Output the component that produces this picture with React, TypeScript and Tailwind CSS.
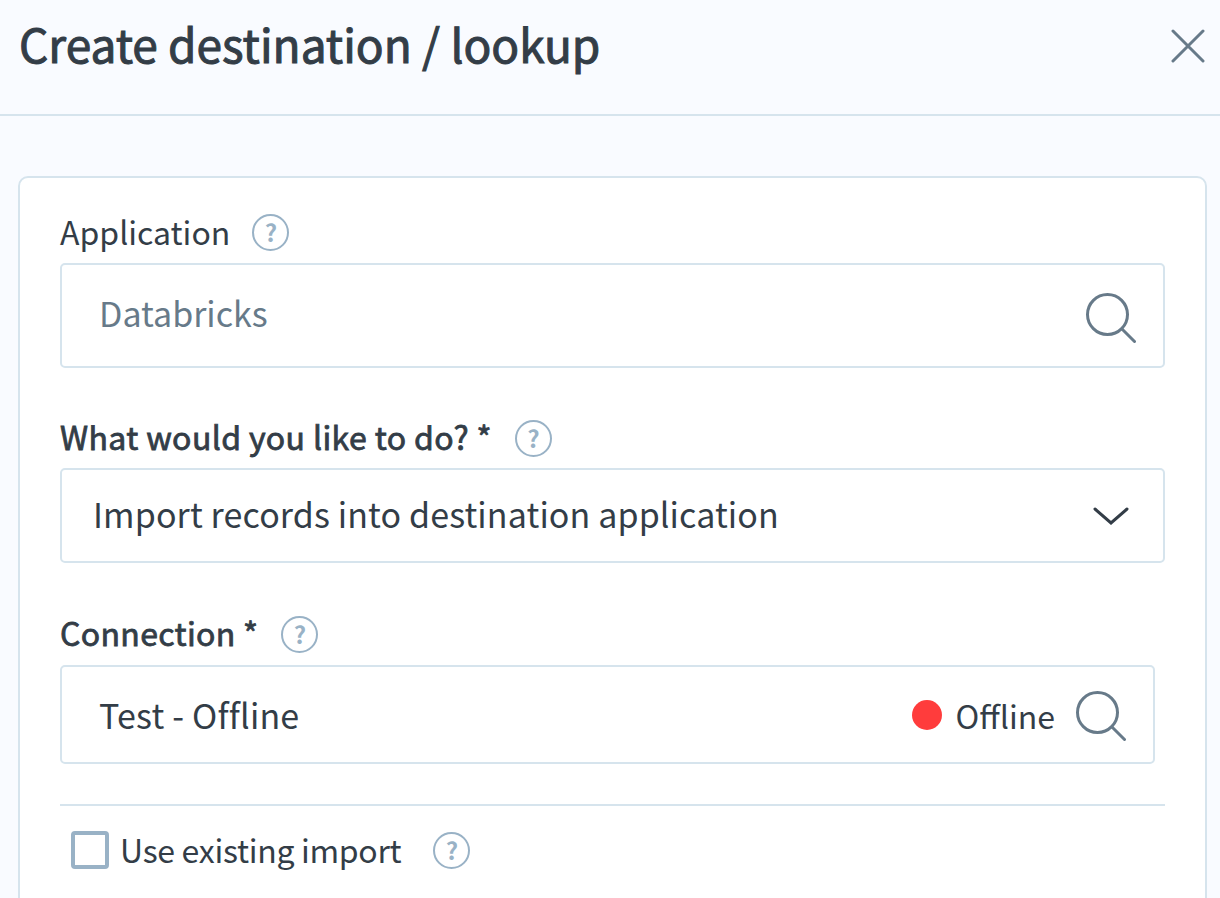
import type { JSX } from 'react';

const font = { fontFamily: '"Noto Sans CJK JP", "Noto Sans", sans-serif' };

function HelpIcon(): JSX.Element {
  return (
    <span className="flex h-[37px] w-[37px] items-center justify-center rounded-full border-2 border-[#99b2c6] bg-white text-[24px] font-bold leading-none text-[#99b2c6]">
      ?
    </span>
  );
}

function SearchIcon({ className }: { className: string }): JSX.Element {
  return (
    <svg className={className} width="50" height="50" viewBox="0 0 50 50" fill="none" stroke="#677a89" strokeWidth="3" strokeLinecap="round">
      <circle cx="21.5" cy="21.5" r="20" />
      <path d="M36.5 36.5L48.5 48.5" />
    </svg>
  );
}

export default function App(): JSX.Element {
  return (
    <div style={font} className="h-[898px] w-[1220px] overflow-hidden bg-[#f9fbff] text-[#333d47]">
      <header className="flex h-[116px] items-start justify-between border-b-2 border-[#d6e4ed] pl-[19px] pr-[15px]">
        <h1 className="mt-[13px] text-[46px] leading-[60px] [-webkit-text-stroke:1px_#333d47]">Create destination / lookup</h1>
        <svg className="mt-[29px]" width="34" height="34" viewBox="0 0 34 34" fill="none" stroke="#677a89" strokeWidth="3" strokeLinecap="round">
          <path d="M2 2L32 32M32 2L2 32" />
        </svg>
      </header>

      <main className="ml-[18px] mt-[60px] h-[760px] w-[1189px] rounded-[10px] border-2 border-[#d6e4ed] bg-white pl-[40px] pr-[40px] pt-[34px]">
        <div className="flex h-[40px] items-center gap-[22px]">
          <label className="pb-[2px] text-[32px] leading-none">Application</label>
          <HelpIcon />
        </div>
        <div className="mt-[11px] flex h-[105px] w-[1105px] items-center justify-between rounded-[5px] border-2 border-[#d6e4ed] pl-[37px] pr-[27px]">
          <span className="pb-[6px] text-[34px] text-[#677a89]">Databricks</span>
          <SearchIcon className="mt-[5px]" />
        </div>

        <div className="mt-[50px] flex h-[40px] items-center gap-[23px]">
          <label className="pb-[4px] text-[32px] leading-none tracking-[0.38px] [-webkit-text-stroke:0.8px_#333d47]">What would you like to do? *</label>
          <HelpIcon />
        </div>
        <div className="mt-[10px] flex h-[95px] w-[1105px] items-center justify-between rounded-[5px] border-2 border-[#d6e4ed] pl-[31px] pr-[34px]">
          <span className="pb-[4px] text-[34px] tracking-[0.12px]">Import records into destination application</span>
          <svg width="36" height="20" viewBox="0 0 36 20" fill="none" stroke="#333d47" strokeWidth="3" strokeLinecap="round">
            <path d="M2 3L18 17L34 3" />
          </svg>
        </div>

        <div className="mt-[51px] flex h-[40px] items-center gap-[23px]">
          <label className="pb-[4px] text-[32px] leading-none tracking-[0.33px] [-webkit-text-stroke:0.8px_#333d47]">Connection *</label>
          <HelpIcon />
        </div>
        <div className="mt-[11px] flex h-[99px] w-[1095px] items-center justify-between rounded-[5px] border-2 border-[#d6e4ed] pl-[37px] pr-[27px]">
          <span className="text-[34px] tracking-[0.2px]">Test - Offline</span>
          <div className="flex items-center">
            <span className="h-[30px] w-[30px] rounded-full bg-[#ff3c3c]" />
            <span className="ml-[14px] mr-[21px] text-[32px]">Offline</span>
            <SearchIcon className="mt-[2px]" />
          </div>
        </div>

        <div className="mt-[40px] h-[2px] w-[1105px] bg-[#d6e4ed]" />

        <div className="ml-[11px] mt-[24px] flex h-[40px] items-center">
          <span className="h-[38px] w-[38px] rounded-[4px] border-[4px] border-[#99b2c6] bg-white" />
          <span className="ml-[11px] pb-[2px] text-[32px] leading-none tracking-[-0.3px]">Use existing import</span>
          <span className="ml-[32px]"><HelpIcon /></span>
        </div>
      </main>
    </div>
  );
}
